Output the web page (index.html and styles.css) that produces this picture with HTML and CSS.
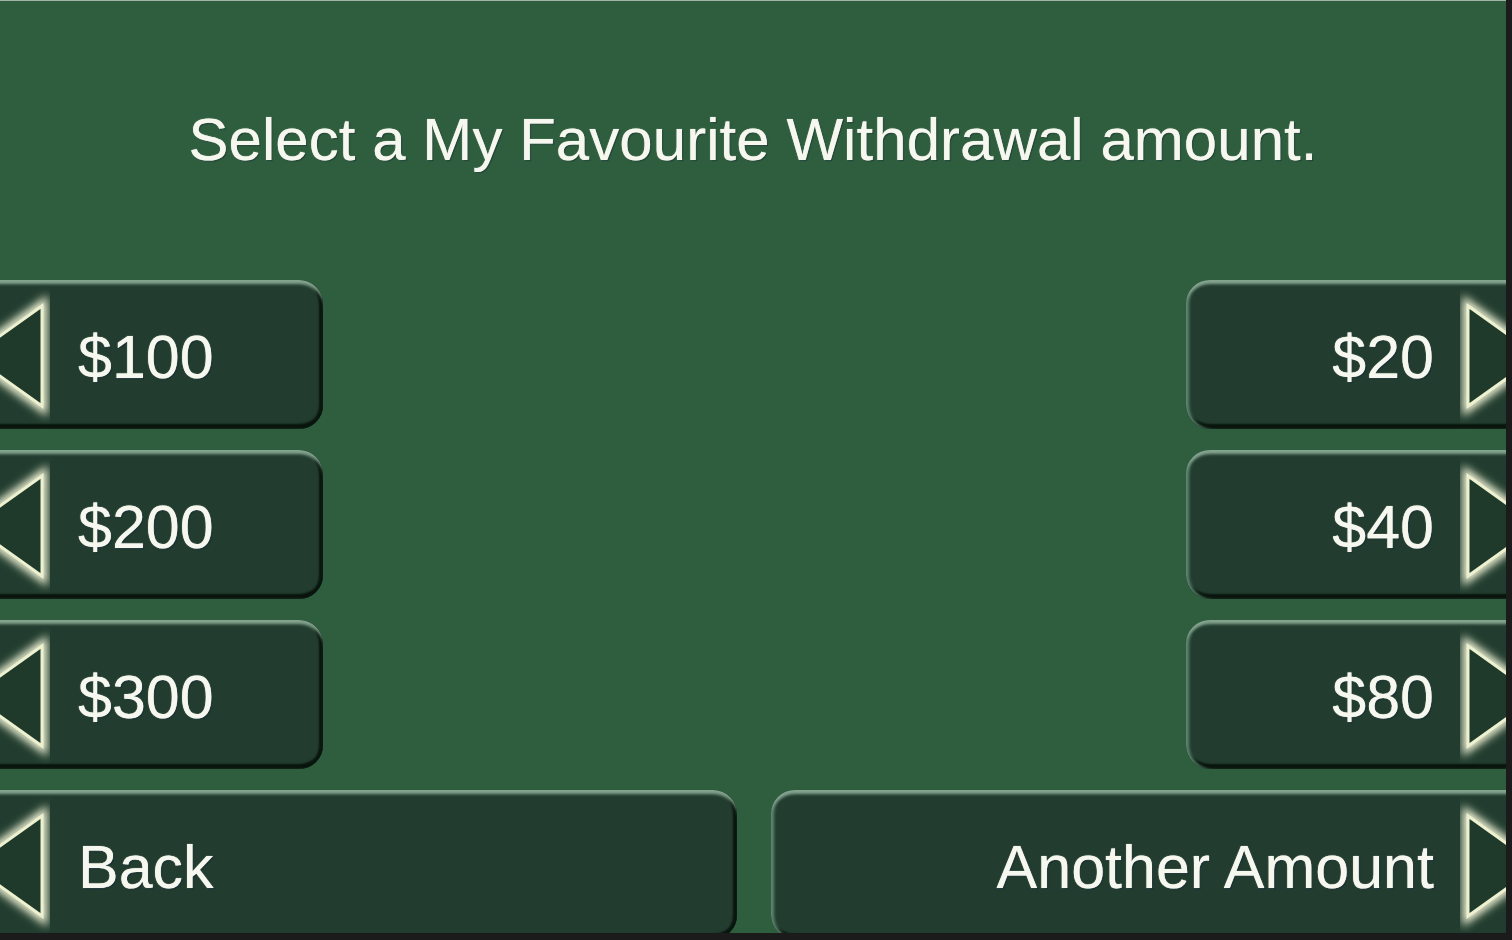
FILE: index.html
```html
<!DOCTYPE html>
<html>
<head>
<meta charset="utf-8">
<title>My Favourite Withdrawal</title>
<link rel="stylesheet" href="styles.css">
</head>
<body>
<div class="screen">
  <div class="panel">
    <h1 class="title">Select a My Favourite Withdrawal amount.</h1>
    <div class="rows">
      <div class="row">
        <div class="btn btn-left small">
          <svg class="arrow" width="80" height="149" viewBox="0 0 80 149"><use href="#larrow"/></svg>
          <span class="label">$100</span>
        </div>
        <div class="btn btn-right small">
          <span class="label">$20</span>
          <svg class="arrow" width="80" height="149" viewBox="0 0 80 149"><use href="#rarrow"/></svg>
        </div>
      </div>
      <div class="row">
        <div class="btn btn-left small">
          <svg class="arrow" width="80" height="149" viewBox="0 0 80 149"><use href="#larrow"/></svg>
          <span class="label">$200</span>
        </div>
        <div class="btn btn-right small">
          <span class="label">$40</span>
          <svg class="arrow" width="80" height="149" viewBox="0 0 80 149"><use href="#rarrow"/></svg>
        </div>
      </div>
      <div class="row">
        <div class="btn btn-left small">
          <svg class="arrow" width="80" height="149" viewBox="0 0 80 149"><use href="#larrow"/></svg>
          <span class="label">$300</span>
        </div>
        <div class="btn btn-right small">
          <span class="label">$80</span>
          <svg class="arrow" width="80" height="149" viewBox="0 0 80 149"><use href="#rarrow"/></svg>
        </div>
      </div>
      <div class="row">
        <div class="btn btn-left wide-left">
          <svg class="arrow" width="80" height="149" viewBox="0 0 80 149"><use href="#larrow"/></svg>
          <span class="label">Back</span>
        </div>
        <div class="btn btn-right wide-right">
          <span class="label">Another Amount</span>
          <svg class="arrow" width="80" height="149" viewBox="0 0 80 149"><use href="#rarrow"/></svg>
        </div>
      </div>
    </div>
  </div>
</div>

<svg class="defs" width="0" height="0">
  <defs>
    <filter id="glow" x="-50%" y="-50%" width="200%" height="200%">
      <feGaussianBlur stdDeviation="4"/>
    </filter>
    <g id="larrow">
      <polygon points="72,26 72,126 2,76" fill="none" stroke="#f0f3d6" stroke-width="11" stroke-linejoin="miter" filter="url(#glow)"/>
      <polygon points="72,26 72,126 2,76" fill="#1f3a2b" stroke="#edf1d0" stroke-width="3"/>
    </g>
    <g id="rarrow">
      <polygon points="8,26 8,126 78,76" fill="none" stroke="#f0f3d6" stroke-width="11" stroke-linejoin="miter" filter="url(#glow)"/>
      <polygon points="8,26 8,126 78,76" fill="#1f3a2b" stroke="#edf1d0" stroke-width="3"/>
    </g>
  </defs>
</svg>
</body>
</html>
```

FILE: styles.css
```css
html, body {
  margin: 0;
  padding: 0;
  background: #1c1c1c;
}

.screen {
  width: 1512px;
  height: 940px;
  background: #1b1b1b;
  overflow: hidden;
}

.panel {
  width: 1506px;
  height: 933px;
  background: #2e5e3e;
  border-top: 1px solid #a3b3a8;
  box-sizing: border-box;
  overflow: hidden;
  font-family: "Liberation Sans", Arial, sans-serif;
  color: #f6f8ef;
}

.title {
  margin: 0;
  padding-top: 109px;
  height: 60px;
  line-height: 60px;
  font-size: 60px;
  font-weight: normal;
  text-align: center;
  letter-spacing: 0.05px;
  text-shadow: 0 0 1px rgba(255, 255, 240, 0.8), 1px 1px 1px rgba(10, 30, 40, 0.6);
}

.rows {
  margin-top: 110px;
  display: flex;
  flex-direction: column;
  gap: 21px;
}

.row {
  display: flex;
  justify-content: space-between;
  height: 149px;
}

.btn {
  height: 149px;
  box-sizing: border-box;
  background: #223d2f;
  border-radius: 24px;
  display: flex;
  align-items: center;
  box-shadow:
    inset 0 6px 3px -2px #84a48f,
    inset 4px 0 3px -1px #5d8570,
    inset -5px 0 2px -1px #0a160f,
    inset 0 -6px 2px -1px #08140c;
}

.btn-left {
  margin-left: -30px;
}

.btn-right {
  margin-right: -34px;
  justify-content: flex-end;
}

.small.btn-left { width: 353px; }
.small.btn-right { width: 354px; }
.wide-left { width: 767px; }
.wide-right { width: 769px; }

.arrow {
  flex: none;
  display: block;
}

.label {
  font-size: 61px;
  line-height: 60px;
  padding-top: 4px;
  white-space: nowrap;
  text-shadow: 0 0 1px rgba(255, 255, 240, 0.9), 1px 1px 1px rgba(10, 30, 50, 0.7);
}

.btn-left .label {
  margin-left: 28px;
}

.btn-right .label {
  margin-right: 26px;
}

.defs {
  position: absolute;
  width: 0;
  height: 0;
}
```
